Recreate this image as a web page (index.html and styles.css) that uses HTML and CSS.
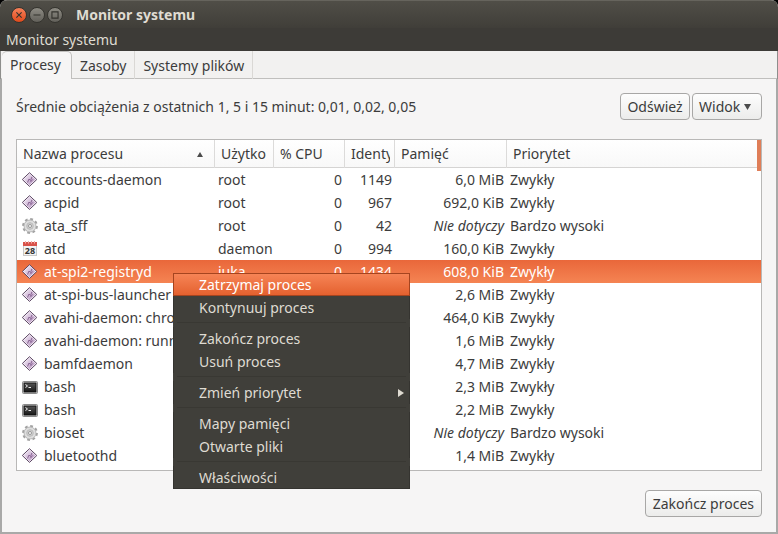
FILE: index.html
```
<!DOCTYPE html>
<html lang="pl">

<head>
    <meta charset="UTF-8">
    <meta name="viewport" content="width=device-width, initial-scale=1.0">
    <title>Monitor systemu</title>
    <link rel="stylesheet" href="styles.css">
</head>

<body>
    <svg class="sprite" aria-hidden="true">
        <defs>
            <linearGradient id="violet" x1="0" y1="0" x2="1" y2="1">
                <stop offset="0" stop-color="#f6eef8" />
                <stop offset="1" stop-color="#b08cba" />
            </linearGradient>
            <linearGradient id="screen" x1="0" y1="0" x2="0" y2="1">
                <stop offset="0" stop-color="#555" />
                <stop offset="1" stop-color="#161616" />
            </linearGradient>
        </defs>
        <symbol id="exec" viewBox="0 0 16 16">
            <path d="M7.500 .7L14.800 7.500L7.500 14.400L.3 7.500Z" fill="#f4ecf6" stroke="#5c4763" />
            <path d="M7.500 2L13.200 7.500L7.500 13L1.900 7.500Z" fill="url(#violet)" />
            <path d="M5.500 10.500L7 7L8.500 8.500L10 4.800M8.500 10L10.500 7.500" fill="none" stroke="#8a6695" />
        </symbol>
        <symbol id="gear" viewBox="0 0 16 16">
            <circle cx="8" cy="8" r="6.900" fill="none" stroke="#a2a2a2" stroke-width="2" stroke-dasharray="2.800 2.619" />
            <circle cx="8" cy="8" r="6" fill="#dedede" stroke="#ababab" stroke-width=".8" />
            <circle cx="8" cy="8" r="3.300" fill="#d0d0d0" stroke="#bcbcbc" />
            <circle cx="8" cy="8" r="1.500" fill="#fff" stroke="#989898" />
        </symbol>
        <symbol id="calendar" viewBox="0 0 16 16">
            <rect x="1.500" y="1.500" width="13" height="13" fill="#f3f3f3" stroke="#c9c9c9" />
            <rect x="1" y="1" width="14" height="4" fill="#d9534a" />
            <path d="M3.500 0V2.500M6.500 0V2.500M9.500 0V2.500M12.500 0V2.500" stroke="#f0b0aa" />
            <text x="8" y="13" class="calendar-day">28</text>
        </symbol>
        <symbol id="terminal" viewBox="0 0 16 16">
            <rect x=".5" y="2.500" width="15" height="12" rx="1" fill="#e4e4e4" stroke="#8b8b8b" />
            <rect x="2" y="4" width="12" height="9" fill="url(#screen)" stroke="#111" />
            <path d="M3.500 5.500L5.500 7L3.500 8.500M6.500 8.500H9" fill="none" stroke="#eee" />
        </symbol>
    </svg>

    <div class="window">
        <header class="titlebar">
            <button class="win-btn close" aria-label="Zamknij">
                <svg viewBox="0 0 16 16"><path d="M5 5L11 11M11 5L5 11" /></svg>
            </button>
            <button class="win-btn" aria-label="Minimalizuj">
                <svg viewBox="0 0 16 16"><path d="M4 8H12" /></svg>
            </button>
            <button class="win-btn" aria-label="Maksymalizuj">
                <svg viewBox="0 0 16 16"><path d="M4.500 4.500H11.500V11.500H4.500Z" /></svg>
            </button>
            <h1 class="title">Monitor systemu</h1>
        </header>
        <nav class="menubar">
            <button class="menubar-item">Monitor systemu</button>
        </nav>

        <div class="tabs" role="tablist">
            <button class="tab active" role="tab" aria-selected="true">Procesy</button>
            <button class="tab" role="tab">Zasoby</button>
            <button class="tab" role="tab">Systemy plików</button>
        </div>

        <main class="panel">
            <div class="toolbar">
                <p class="load">Średnie obciążenia z ostatnich 1, 5 i 15 minut: 0,01, 0,02, 0,05</p>
                <button class="btn">Odśwież</button>
                <button class="btn">Widok <svg class="caret" viewBox="0 0 7 6"><path d="M0 0H7L3.500 6Z" /></svg></button>
            </div>

            <div class="list">
                <table class="processes">
                    <colgroup>
                        <col class="col-name">
                        <col class="col-user">
                        <col class="col-cpu">
                        <col class="col-id">
                        <col class="col-mem">
                        <col>
                    </colgroup>
                    <thead>
                        <tr>
                            <th aria-sort="ascending">
                                <div class="head">Nazwa procesu <svg class="sort" viewBox="0 0 6 5"><path d="M0 5H6L3 0Z" /></svg></div>
                            </th>
                            <th><div class="head">Użytko</div></th>
                            <th><div class="head">% CPU</div></th>
                            <th><div class="head">Identy</div></th>
                            <th><div class="head">Pamięć</div></th>
                            <th><div class="head">Priorytet</div></th>
                        </tr>
                    </thead>
                    <tbody>
                        <tr>
                            <td><div class="name"><svg class="icon"><use href="#exec" /></svg>accounts-daemon</div></td>
                            <td>root</td>
                            <td class="num">0</td>
                            <td class="num">1149</td>
                            <td class="num">6,0 MiB</td>
                            <td>Zwykły</td>
                        </tr>
                        <tr>
                            <td><div class="name"><svg class="icon"><use href="#exec" /></svg>acpid</div></td>
                            <td>root</td>
                            <td class="num">0</td>
                            <td class="num">967</td>
                            <td class="num">692,0 KiB</td>
                            <td>Zwykły</td>
                        </tr>
                        <tr>
                            <td><div class="name"><svg class="icon"><use href="#gear" /></svg>ata_sff</div></td>
                            <td>root</td>
                            <td class="num">0</td>
                            <td class="num">42</td>
                            <td class="num"><em>Nie dotyczy</em></td>
                            <td>Bardzo wysoki</td>
                        </tr>
                        <tr>
                            <td><div class="name"><svg class="icon"><use href="#calendar" /></svg>atd</div></td>
                            <td>daemon</td>
                            <td class="num">0</td>
                            <td class="num">994</td>
                            <td class="num">160,0 KiB</td>
                            <td>Zwykły</td>
                        </tr>
                        <tr class="selected">
                            <td><div class="name"><svg class="icon"><use href="#exec" /></svg>at-spi2-registryd</div></td>
                            <td>juka</td>
                            <td class="num">0</td>
                            <td class="num">1434</td>
                            <td class="num">608,0 KiB</td>
                            <td>Zwykły</td>
                        </tr>
                        <tr>
                            <td><div class="name"><svg class="icon"><use href="#exec" /></svg>at-spi-bus-launcher</div></td>
                            <td></td>
                            <td></td>
                            <td></td>
                            <td class="num">2,6 MiB</td>
                            <td>Zwykły</td>
                        </tr>
                        <tr>
                            <td><div class="name"><svg class="icon"><use href="#exec" /></svg>avahi-daemon: chroot</div></td>
                            <td></td>
                            <td></td>
                            <td></td>
                            <td class="num">464,0 KiB</td>
                            <td>Zwykły</td>
                        </tr>
                        <tr>
                            <td><div class="name"><svg class="icon"><use href="#exec" /></svg>avahi-daemon: running</div></td>
                            <td></td>
                            <td></td>
                            <td></td>
                            <td class="num">1,6 MiB</td>
                            <td>Zwykły</td>
                        </tr>
                        <tr>
                            <td><div class="name"><svg class="icon"><use href="#exec" /></svg>bamfdaemon</div></td>
                            <td></td>
                            <td></td>
                            <td></td>
                            <td class="num">4,7 MiB</td>
                            <td>Zwykły</td>
                        </tr>
                        <tr>
                            <td><div class="name"><svg class="icon"><use href="#terminal" /></svg>bash</div></td>
                            <td></td>
                            <td></td>
                            <td></td>
                            <td class="num">2,3 MiB</td>
                            <td>Zwykły</td>
                        </tr>
                        <tr>
                            <td><div class="name"><svg class="icon"><use href="#terminal" /></svg>bash</div></td>
                            <td></td>
                            <td></td>
                            <td></td>
                            <td class="num">2,2 MiB</td>
                            <td>Zwykły</td>
                        </tr>
                        <tr>
                            <td><div class="name"><svg class="icon"><use href="#gear" /></svg>bioset</div></td>
                            <td></td>
                            <td></td>
                            <td></td>
                            <td class="num"><em>Nie dotyczy</em></td>
                            <td>Bardzo wysoki</td>
                        </tr>
                        <tr>
                            <td><div class="name"><svg class="icon"><use href="#exec" /></svg>bluetoothd</div></td>
                            <td></td>
                            <td></td>
                            <td></td>
                            <td class="num">1,4 MiB</td>
                            <td>Zwykły</td>
                        </tr>
                    </tbody>
                </table>
                <div class="scroll-thumb"></div>

                <div class="context-menu" role="menu">
                    <button class="menu-item hover" role="menuitem">Zatrzymaj proces</button>
                    <button class="menu-item" role="menuitem">Kontynuuj proces</button>
                    <hr class="separator">
                    <button class="menu-item" role="menuitem">Zakończ proces</button>
                    <button class="menu-item" role="menuitem">Usuń proces</button>
                    <hr class="separator">
                    <button class="menu-item" role="menuitem" aria-haspopup="true">Zmień priorytet <svg class="arrow" viewBox="0 0 6 8"><path d="M0 0L6 4L0 8Z" /></svg></button>
                    <hr class="separator">
                    <button class="menu-item" role="menuitem">Mapy pamięci</button>
                    <button class="menu-item" role="menuitem">Otwarte pliki</button>
                    <hr class="separator">
                    <button class="menu-item" role="menuitem">Właściwości</button>
                </div>
            </div>

            <footer class="actions">
                <button class="btn">Zakończ proces</button>
            </footer>
        </main>
    </div>
</body>

</html>
```
FILE: styles.css
```
* {
    box-sizing: border-box;
    margin: 0;
    padding: 0;
}

body {
    min-height: 100vh;
    background: #000;
    color: #3c3c3c;
    font-family: "Noto Sans", "Open Sans", sans-serif;
    font-size: 14px;
    line-height: 20px;
}

button {
    border: 0;
    background: none;
    color: inherit;
    font: inherit;
    white-space: nowrap;
}

.sprite {
    position: absolute;
    width: 0;
    height: 0;
}

.window {
    display: flex;
    flex-direction: column;
    min-height: 100vh;
    border-radius: 7px 7px 0 0;
    background: #f2f1f0;
    overflow: hidden;
}

/* title and menu bar */
.titlebar {
    display: flex;
    align-items: center;
    gap: 2px;
    height: 28px;
    padding: 0 11px;
    border-top: 1px solid #66645d;
    background: linear-gradient(to bottom, #504e47, #403e39);
}

.win-btn {
    display: flex;
    width: 16px;
    height: 16px;
    border: 1px solid #35342f;
    border-radius: 50%;
    background: linear-gradient(to bottom, #8d8b83, #62605a);
}

.win-btn.close {
    background: linear-gradient(to bottom, #f7815a, #df4a1c);
}

.win-btn svg {
    width: 100%;
    fill: none;
    stroke: #33322d;
    stroke-width: 1.3;
}

.title {
    margin-left: 11px;
    color: #dfdbd2;
    font-size: 14px;
    font-weight: 700;
}

.menubar {
    display: flex;
    height: 23px;
    padding: 0 6px;
    background: #3d3b37;
    color: #dfdbd2;
}

/* tabs */
.tabs {
    display: flex;
    height: 28px;
    padding-left: 1px;
    border-left: 1px solid #8e8e8c;
    border-right: 1px solid #8e8e8c;
    box-shadow: inset 0 -1px #c0bfbd;
}

.tab {
    padding: 3px 8px 2px;
    border-right: 1px solid #dad8d5;
}

.tab.active {
    padding: 0 10px 2px 8px;
    border: 1px solid #c0bfbd;
    border-width: 1px 1px 0 0;
    border-radius: 5px 5px 0 0;
    background: #f6f5f5;
}

.panel {
    display: flex;
    flex: 1;
    flex-direction: column;
    padding: 14px 14px 15px;
    border: 2px solid #a9a9a8;
    border-top: 0;
    background: #f6f5f5;
}

.toolbar {
    display: flex;
    align-items: center;
    gap: 2px;
    margin-bottom: 19px;
}

.load {
    flex: 1;
}

.btn {
    height: 27px;
    padding: 0 7px;
    border: 1px solid #a8a7a6;
    border-radius: 4px;
    background: linear-gradient(to bottom, #fdfdfd, #ececeb);
}

.toolbar .btn {
    min-width: 70px;
    padding: 0 6px;
}

.caret {
    width: 7px;
    height: 6px;
    margin: 0 4px 2px 0;
    fill: #4c4c4c;
}

/* process list */
.list {
    position: relative;
    flex: 1;
    border: 1px solid #b9b8b7;
    background: #fff;
}

.processes {
    width: 100%;
    border-collapse: collapse;
    table-layout: fixed;
}

.col-name {
    width: 198px;
}

.col-user {
    width: 59px;
}

.col-cpu {
    width: 71px;
}

.col-id {
    width: 50px;
}

.col-mem {
    width: 112px;
}

.processes thead tr {
    height: 28px;
    background: linear-gradient(to bottom, #fff, #f8f8f8);
    box-shadow: inset 0 -1px #d5d4d3;
}

.processes th {
    padding: 0 5px 0 6px;
    box-shadow: inset -1px 0 #dcdbda;
    font-weight: 400;
    text-align: left;
}

.processes th:last-child {
    box-shadow: none;
}

.head {
    display: flex;
    align-items: center;
    justify-content: space-between;
    overflow: hidden;
    white-space: nowrap;
}

.sort {
    width: 6px;
    height: 5px;
    margin-right: 7px;
    fill: #4c4c4c;
}

.processes td {
    height: 23px;
    padding: 0 3px;
    white-space: nowrap;
}

.processes td.num {
    text-align: right;
}

.name {
    display: flex;
    align-items: center;
    gap: 6px;
    padding-left: 2px;
}

.icon {
    flex: none;
    width: 16px;
    height: 16px;
}

.calendar-day {
    fill: #333;
    font-size: 9px;
    font-weight: 700;
    text-anchor: middle;
}

.selected {
    background: linear-gradient(to bottom, #e9673a, #f58453);
    color: #fff;
}

.scroll-thumb {
    position: absolute;
    top: 0;
    right: 0;
    width: 4px;
    height: 31px;
    background: #df7e58;
}

/* context menu */
.context-menu {
    position: absolute;
    top: 133px;
    left: 156px;
    width: 237px;
    box-shadow: inset 0 0 0 1px #353430;
    background: #403f3a;
    color: #dfdbd2;
}

.menu-item {
    display: flex;
    align-items: center;
    justify-content: space-between;
    width: 100%;
    height: 23px;
    padding: 0 6px 0 26px;
}

.menu-item.hover {
    border: 1px solid #a5441f;
    padding: 0 5px 0 25px;
    background: linear-gradient(to bottom, #f68456, #e4612f);
    color: #fff;
}

.separator {
    height: 8px;
    border: 3px solid #403f3a;
    border-width: 3px 4px 4px;
    background: #393833;
}

.arrow {
    width: 6px;
    height: 8px;
    fill: #dfdbd2;
}

.actions {
    display: flex;
    justify-content: flex-end;
    margin-top: 19px;
}
```
